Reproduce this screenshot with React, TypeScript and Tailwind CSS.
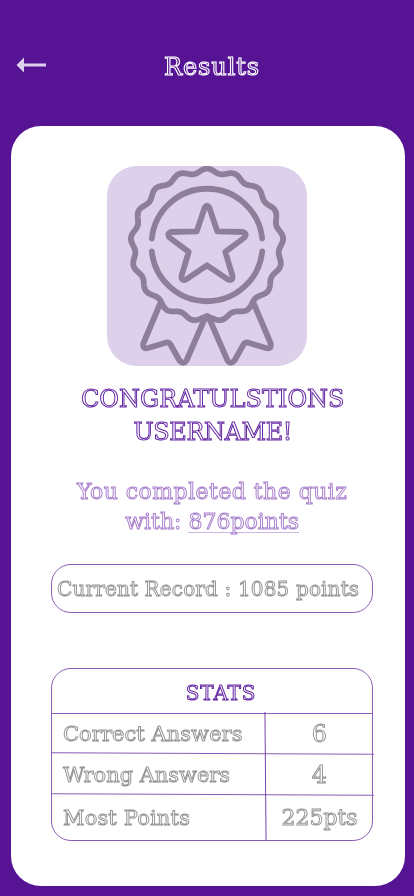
import React from "react";

const FACE = "font-['DejaVu_Serif',serif] whitespace-nowrap";

function scallop() {
  const pts: string[] = [];
  for (let i = 0; i < 510; i++) {
    const a = (i / 510) * Math.PI * 2;
    const r = 74.2 + 2.2 * Math.cos(17 * a);
    pts.push(`${(100 + r * Math.sin(a)).toFixed(2)} ${(79 - r * Math.cos(a)).toFixed(2)}`);
  }
  return `M${pts.join("L")}Z`;
}

function Medal() {
  return (
    <svg
      viewBox="0 0 200 200"
      className="h-[200px] w-[200px]"
      fill="none"
      stroke="#8e7e9a"
      strokeWidth="5.8"
      strokeLinecap="round"
      strokeLinejoin="round"
    >
      <path d={scallop()} />
      <path d="M44.8 72.5A55.5 55.5 0 0 1 155.2 72.5M44.8 85.5A55.5 55.5 0 0 0 155.2 85.5" />
      <path d="M97.7 41.5Q100 38 102.3 41.5L110.3 65.3L136 66Q140.5 67.5 137.5 71.5L118.3 85.8L125.5 110Q126 115 121.5 113.8L100 99.3L78.5 113.8Q74 115 74.5 110L81.7 85.8L62.5 71.5Q59.5 67.5 64 66L89.7 65.3Z" />
      <path d="M53 138L36.5 177Q35 183.5 41 182L59.5 176.5Q62 176 63.5 178.5L72.5 194.5Q76.5 199 79.5 194.5L98 152Q100 148 102 152L120.5 194.5Q123.5 199 127.5 194.5L136.5 178.5Q138 176 140.5 176.5L159 182Q165 183.5 163.5 177L147 138" />
    </svg>
  );
}

const rows = [
  { label: "Correct Answers", value: "6", height: "h-[41px]", size: "text-[24px]", spacing: "tracking-[0.05px]" },
  { label: "Wrong Answers", value: "4", height: "h-[41px]", size: "text-[24px]", spacing: "tracking-[-0.05px]" },
  { label: "Most Points", value: "225pts", height: "h-[45px]", size: "text-[22px]", spacing: "tracking-[0.15px]" },
];

export default function App() {
  return (
    <div className={`flex h-[896px] w-[414px] flex-col overflow-hidden bg-[#561494] ${FACE}`}>
      <header className="flex h-[126px] shrink-0 items-start pl-4 pt-[50px]">
        <svg width="30" height="30" viewBox="0 0 30 30" fill="#ddd0ea">
          <path d="M0.5 15L8 7.5V13.5H30V16.5H8V22.5Z" />
        </svg>
        <h1 className="ml-[118px] text-[24px] leading-[34px] tracking-[0.9px] text-[#561494] will-change-transform [-webkit-text-stroke:1.1px_#fff]">
          Results
        </h1>
      </header>
      <main className="ml-[11px] flex h-[760px] w-[394px] flex-col items-center rounded-[30px] bg-white pt-10">
        <div className="mr-[2px] h-[200px] w-[200px] shrink-0 overflow-hidden rounded-[30px] bg-[#ddd0ea]">
          <Medal />
        </div>
        <h2 className="ml-2.5 mt-[17px] text-center text-[24px] leading-[33px] text-white will-change-transform [-webkit-text-stroke:1px_#6528a4]">
          CONGRATULSTIONS
          <br />
          <span className="tracking-[-0.4px]">USERNAME!</span>
        </h2>
        <p className="ml-2 mt-[28px] text-center text-[22px] leading-[30px] text-white will-change-transform [-webkit-text-stroke:0.95px_#a77dcc]">
          <span className="tracking-[0.45px]">You completed the quiz</span>
          <br />
          with: <span className="inline-block h-[26px] border-b border-[#cdb5e3]">876points</span>
        </p>
        <div className="ml-2 mt-[27px] flex h-[49px] w-[322px] shrink-0 items-center rounded-[20px] border border-[#895bb8] pl-[5px] text-[20px] tracking-[0.15px] text-white will-change-transform [-webkit-text-stroke:0.95px_#929292]">
          Current Record : 1085 points
        </div>
        <section className="relative ml-2 mt-[55px] h-[173px] w-[322px] shrink-0 rounded-[20px] border border-[#895bb8] will-change-transform">
          <h3 className="flex h-[45px] items-center justify-center border-b border-[#895bb8] pl-[18px] pt-1 text-[20px] tracking-[0.8px] text-white [-webkit-text-stroke:1px_#6528a4]">
            STATS
          </h3>
          {rows.map((r) => (
            <div key={r.label} className={`flex text-white [-webkit-text-stroke:0.95px_#929292] ${r.height}`}>
              <div className={`flex w-[214px] items-center pl-[11px] text-[21px] ${r.spacing}`}>{r.label}</div>
              <div className={`flex flex-1 items-center justify-center pb-0.5 pl-px ${r.size}`}>{r.value}</div>
            </div>
          ))}
          <div className="absolute left-0 top-[84px] h-px w-[322px] rotate-[0.3deg] bg-[#895bb8]" />
          <div className="absolute left-0 top-[125px] h-px w-[322px] rotate-[0.3deg] bg-[#895bb8]" />
          <div className="absolute left-[213px] top-[43px] h-[129px] w-px rotate-[-0.5deg] bg-[#7940ae]" />
        </section>
      </main>
    </div>
  );
}
